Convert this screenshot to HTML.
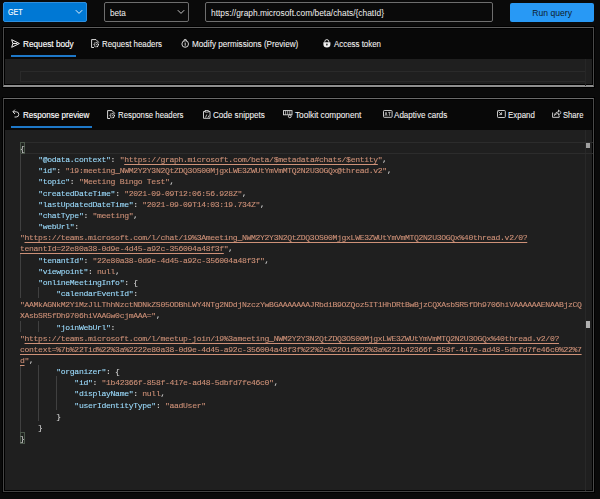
<!DOCTYPE html>
<html><head><meta charset="utf-8">
<style>
*{margin:0;padding:0;box-sizing:border-box}
html,body{width:600px;height:499px;overflow:hidden;background:#0a0a0a;font-family:"Liberation Sans",sans-serif;color:#f3f2f1;position:relative}
.dd{position:absolute;top:2px;height:20px;border:1px solid #6e6e6e;border-radius:2px;background:#0a0a0a;font-size:8.6px;line-height:18px;padding-left:6px;white-space:nowrap}
.get{left:3px;width:84px;background:#0078d4;border-color:#2f8fde;color:#fff;padding-left:5px}
.beta{left:104px;width:85px}
.url{left:205px;width:288px}
.run{left:510px;width:84px;top:2.5px;height:19px;background:#2899f5;border-radius:2px;color:#0e1d2c;font-size:8.6px;line-height:20px;text-align:center;position:absolute}
.chev{position:absolute;top:6px;width:8px;height:6px}
.panel{position:absolute;left:3px;width:591px;border:1px solid #4a4a4a;background:#080808;box-shadow:0 0 0 1px #000}
.ring{position:absolute;left:4px;width:589px;border:1px solid #000}
.tab{position:absolute;font-size:9.2px;transform-origin:0 0;white-space:nowrap;color:#f3f2f1;line-height:10px;-webkit-text-stroke:0.08px #f3f2f1}
.ic{position:absolute;overflow:visible}
.ul{position:absolute;height:2px;background:#1e78c8}
.ed{position:absolute;background:#1f1f1f}
.code{position:absolute;left:20px;font-family:"Liberation Mono",monospace;font-size:8.1px;letter-spacing:-0.328px;white-space:pre;line-height:11.15px;color:#d4d4d4;will-change:transform;-webkit-text-stroke:0.1px currentColor}
.k{color:#9cdcfe}.s{color:#ce9178}.u{color:#ce9178;text-decoration:underline;text-underline-offset:1.5px}
.guide{position:absolute;width:1px;background:#404040}
</style></head><body>
<div class="dd get"><span style="display:inline-block;transform:scaleX(0.79);transform-origin:0 0;font-size:9px;position:relative;top:-0.4px;left:-0.6px;-webkit-text-stroke:0.12px #fff">GET</span><svg class="chev" style="left:71px" viewBox="0 0 8 6"><path d="M0.8 1.2 L4 4.4 L7.2 1.2" fill="none" stroke="#fff" stroke-width="0.9"/></svg></div>
<div class="dd beta" style="padding-left:5px"><span style="display:inline-block;transform:scaleX(0.89);transform-origin:0 0;font-size:9.2px;position:relative;top:0.5px">beta</span><svg class="chev" style="left:72px" viewBox="0 0 8 6"><path d="M0.8 1.2 L4 4.4 L7.2 1.2" fill="none" stroke="#ddd" stroke-width="0.9"/></svg></div>
<div class="dd url" style="padding-left:5px"><span style="display:inline-block;transform:scaleX(0.913);transform-origin:0 0;font-size:9.2px;position:relative;top:0.5px">https://graph.microsoft.com/beta/chats/{chatId}</span></div>
<div class="run"><span style="display:inline-block;transform:scaleX(0.936);transform-origin:50% 0;font-size:9.2px;position:relative;top:0px">Run query</span></div>

<div class="panel" style="top:27px;height:60px;border-top-color:#5e5e5e;border-bottom:2px solid #8e8e8e"></div><div class="ring" style="top:28px;height:57px"></div>
<!-- request tabs -->
<svg class="ic" style="left:10.5px;top:38.5px" width="9" height="9" viewBox="0 0 9 9"><path d="M0.7 0.7 L8.4 4.5 L0.7 8.3 L1.9 4.5 Z" fill="none" stroke="#ececec" stroke-width="1" stroke-linejoin="round"/><path d="M1.9 4.5 H6.2" stroke="#ececec" stroke-width="1.1"/></svg>
<div class="tab" style="left:23px;top:39px;transform:scaleX(0.8947);-webkit-text-stroke:0.15px #fff;color:#fff">Request body</div>
<div class="ul" style="left:11px;top:55px;width:65px"></div>
<svg class="ic" style="left:91px;top:39px" width="9" height="9" viewBox="0 0 9 9"><path d="M3 8.5 H0.6 V0.6 H5 L7.6 3.2 V3.6" fill="none" stroke="#e4e4e4" stroke-width="0.95"/><circle cx="5.3" cy="5.6" r="2.1" fill="none" stroke="#e8e8e8" stroke-width="1.3" stroke-dasharray="0.9 0.5"/><circle cx="5.3" cy="5.6" r="0.6" fill="#d8d8d8"/></svg>
<div class="tab" style="left:102px;top:39px;transform:scaleX(0.8571)">Request headers</div>
<svg class="ic" style="left:181px;top:39px" width="9" height="9" viewBox="0 0 9 9"><circle cx="4.2" cy="5" r="3.3" fill="none" stroke="#e8e8e8" stroke-width="0.9"/><path d="M2.8 1.8 A1.4 1.4 0 0 1 5.6 1.8" fill="none" stroke="#e8e8e8" stroke-width="0.9"/><path d="M4.2 3.5 V6" stroke="#e8e8e8" stroke-width="0.9"/><circle cx="4.2" cy="6.8" r="0.5" fill="#fff"/></svg>
<div class="tab" style="left:192px;top:39px;transform:scaleX(0.8858)">Modify permissions (Preview)</div>
<svg class="ic" style="left:323px;top:39px" width="8" height="9" viewBox="0 0 8 9"><path d="M1.8 3.3 V2.6 A2 2 0 0 1 5.8 2.6 V3.3" fill="none" stroke="#f0f0f0" stroke-width="0.9"/><path d="M0.4 3.3 H7.4 V5.5 A3.5 3 0 0 1 0.4 5.5 Z" fill="#f0f0f0"/><ellipse cx="3.9" cy="5.6" rx="0.7" ry="1.1" fill="#0a0a0a"/></svg>
<div class="tab" style="left:334px;top:39px;transform:scaleX(0.8600)">Access token</div>
<div class="ed" style="left:5px;top:59px;width:587px;height:25px"></div>
<div style="position:absolute;left:20px;top:71px;width:566px;height:11px;border:1px solid #2a2a2a"></div><div style="position:absolute;left:585px;top:59px;width:8px;height:27px;border-left:1px solid #262626"></div>

<div class="panel" style="top:98px;height:394px;border-top-color:#6a6a6a;border-left-color:#454545;border-bottom-color:#424242"></div><div class="ring" style="top:99px;height:392px"></div>
<!-- response tabs -->
<svg class="ic" style="left:12px;top:109px" width="8" height="9" viewBox="0 0 8 9"><path d="M3 0.6 L0.8 2.8 L3 5" fill="none" stroke="#e8e8e8" stroke-width="0.9" stroke-linejoin="round"/><path d="M1 2.8 H4.2 A2.6 2.6 0 0 1 4.2 8 H2.5" fill="none" stroke="#e8e8e8" stroke-width="0.9"/></svg>
<div class="tab" style="left:23px;top:110px;transform:scaleX(0.8789);-webkit-text-stroke:0.15px #fff;color:#fff">Response preview</div>
<div class="ul" style="left:11px;top:125.5px;width:81px"></div>
<svg class="ic" style="left:107px;top:110px" width="9" height="9" viewBox="0 0 9 9"><path d="M3 8.5 H0.6 V0.6 H5 L7.6 3.2 V3.6" fill="none" stroke="#e4e4e4" stroke-width="0.95"/><circle cx="5.3" cy="5.6" r="2.1" fill="none" stroke="#e8e8e8" stroke-width="1.3" stroke-dasharray="0.9 0.5"/><circle cx="5.3" cy="5.6" r="0.6" fill="#d8d8d8"/></svg>
<div class="tab" style="left:118px;top:110px;transform:scaleX(0.8494)">Response headers</div>
<svg class="ic" style="left:203px;top:110px" width="9" height="9" viewBox="0 0 9 9"><path d="M2 1.5 H0.5 V8.3 H7 V1.5 H5.5" fill="none" stroke="#e0e0e0" stroke-width="0.9"/><rect x="2.2" y="0.5" width="3" height="1.6" fill="none" stroke="#e0e0e0" stroke-width="0.8"/><path d="M2.5 7.5 L3.8 4.5 M5 7.5 L6 5.5" stroke="#e0e0e0" stroke-width="0.8"/></svg>
<div class="tab" style="left:213px;top:110px;transform:scaleX(0.8814)">Code snippets</div>
<svg class="ic" style="left:283px;top:110px" width="10" height="8" viewBox="0 0 10 8"><rect x="0.5" y="0.6" width="8.5" height="4.2" fill="none" stroke="#e0e0e0" stroke-width="0.9"/><path d="M2.6 0.6 V4.8 M4.7 0.6 V4.8 M6.8 0.6 V4.8" stroke="#e0e0e0" stroke-width="0.7"/><circle cx="6.8" cy="6.3" r="1.4" fill="#0a0a0a" stroke="#e8e8e8" stroke-width="0.9"/></svg>
<div class="tab" style="left:295px;top:110px;transform:scaleX(0.8960)">Toolkit component</div>
<svg class="ic" style="left:383px;top:110px" width="10" height="8" viewBox="0 0 10 8"><rect x="0.5" y="0.5" width="8.6" height="6.8" rx="0.8" fill="none" stroke="#e0e0e0" stroke-width="0.9"/><path d="M2 5.8 L3 2.2 L4 5.8 M5.2 2.4 H7.6 M6.4 2.4 V5.8" fill="none" stroke="#e0e0e0" stroke-width="0.7"/></svg>
<div class="tab" style="left:394px;top:110px;transform:scaleX(0.8787)">Adaptive cards</div>
<svg class="ic" style="left:497px;top:110px" width="9" height="8" viewBox="0 0 9 8"><rect x="0.5" y="0.5" width="7.8" height="7" rx="0.8" fill="none" stroke="#e0e0e0" stroke-width="0.9"/><path d="M1.5 1.5 L4.5 4.5 M2.2 4.6 H4.6 V2.2" fill="none" stroke="#e0e0e0" stroke-width="0.8"/></svg>
<div class="tab" style="left:508px;top:110px;transform:scaleX(0.8613)">Expand</div>
<svg class="ic" style="left:552px;top:109px" width="10" height="9" viewBox="0 0 10 9"><path d="M0.6 3.5 V8.3 H7.2 V6.5" fill="none" stroke="#e0e0e0" stroke-width="0.9"/><path d="M2.5 6.5 C2.5 4 4.5 3 6.5 3 V1 L9.2 3.6 L6.5 6.2 V4.5 C5 4.5 3.5 5 2.5 6.5 Z" fill="none" stroke="#e8e8e8" stroke-width="0.8" stroke-linejoin="round"/></svg>
<div class="tab" style="left:563px;top:110px;transform:scaleX(0.8320)">Share</div>

<div class="ed" style="left:5px;top:130px;width:587px;height:360px"></div>
<!-- overview ruler -->
<div style="position:absolute;left:585px;top:130px;width:8px;height:361px;border-left:1px solid #282828"></div>
<div style="position:absolute;left:586px;top:142px;width:4px;height:6px;background:#a0a0a0"></div>
<div style="position:absolute;left:586px;top:321px;width:4px;height:7px;background:#b0b0b0"></div>
<!-- current line -->
<div style="position:absolute;left:20px;top:142px;width:573px;height:12px;border-top:1px solid #2c2c2c;border-bottom:1px solid #2c2c2c"></div>
<div style="position:absolute;left:20px;top:142px;width:5px;height:12px;border:1px solid #4a564a;background:#1f231f"></div>
<div style="position:absolute;left:20px;top:432px;width:5px;height:12px;border:1px solid #4a564a;background:#1f231f"></div>
<div class="guide" style="left:20px;top:153.35px;height:78.05px"></div>
<div class="guide" style="left:20px;top:253.70px;height:44.60px"></div>
<div class="guide" style="left:20px;top:320.60px;height:11.15px"></div>
<div class="guide" style="left:20px;top:365.20px;height:66.90px"></div>
<div class="guide" style="left:38px;top:287.15px;height:11.15px"></div>
<div class="guide" style="left:38px;top:320.60px;height:11.15px"></div>
<div class="guide" style="left:38px;top:365.20px;height:55.75px"></div>
<div class="guide" style="left:56px;top:376.35px;height:33.45px"></div>
<div class="code" style="top:143.1px">{
    <span class="k">&quot;@odata.context&quot;</span>: <span class="s">&quot;</span><span class="u">https://graph.microsoft.com/beta/$metadata#chats/$entity</span><span class="s">&quot;</span>,
    <span class="k">&quot;id&quot;</span>: <span class="s">&quot;19:meeting_NWM2Y2Y3N2QtZDQ3OS00MjgxLWE3ZWUtYmVmMTQ2N2U3OGQx@thread.v2&quot;</span>,
    <span class="k">&quot;topic&quot;</span>: <span class="s">&quot;Meeting Bingo Test&quot;</span>,
    <span class="k">&quot;createdDateTime&quot;</span>: <span class="s">&quot;2021-09-09T12:06:56.928Z&quot;</span>,
    <span class="k">&quot;lastUpdatedDateTime&quot;</span>: <span class="s">&quot;2021-09-09T14:03:19.734Z&quot;</span>,
    <span class="k">&quot;chatType&quot;</span>: <span class="s">&quot;meeting&quot;</span>,
    <span class="k">&quot;webUrl&quot;</span>:
<span class="s">&quot;</span><span class="u">https://teams.microsoft.com/l/chat/19%3Ameeting_NWM2Y2Y3N2QtZDQ3OS00MjgxLWE3ZWUtYmVmMTQ2N2U3OGQx%40thread.v2/0?</span>
<span class="u">tenantId=22e80a38-0d9e-4d45-a92c-356004a48f3f</span><span class="s">&quot;</span>,
    <span class="k">&quot;tenantId&quot;</span>: <span class="s">&quot;22e80a38-0d9e-4d45-a92c-356004a48f3f&quot;</span>,
    <span class="k">&quot;viewpoint&quot;</span>: <span class="s">null</span>,
    <span class="k">&quot;onlineMeetingInfo&quot;</span>: {
        <span class="k">&quot;calendarEventId&quot;</span>:
<span class="s">&quot;AAMkAGNkM2Y1MzJlLThhNzctNDNkZS05ODBhLWY4NTg2NDdjNzczYwBGAAAAAAAJRbdiB9OZQoz5IT1HhDRtBwBjzCQXAsbSR5fDh9706hiVAAAAAAENAABjzCQ</span>
<span class="s">XAsbSR5fDh9706hiVAAGw0cjmAAA=&quot;</span>,
        <span class="k">&quot;joinWebUrl&quot;</span>:
<span class="s">&quot;</span><span class="u">https://teams.microsoft.com/l/meetup-join/19%3ameeting_NWM2Y2Y3N2QtZDQ3OS00MjgxLWE3ZWUtYmVmMTQ2N2U3OGQx%40thread.v2/0?</span>
<span class="u">context=%7b%22Tid%22%3a%2222e80a38-0d9e-4d45-a92c-356004a48f3f%22%2c%22Oid%22%3a%221b42366f-858f-417e-ad48-5dbfd7fe46c0%22%7</span>
<span class="u">d</span><span class="s">&quot;</span>,
        <span class="k">&quot;organizer&quot;</span>: {
            <span class="k">&quot;id&quot;</span>: <span class="s">&quot;1b42366f-858f-417e-ad48-5dbfd7fe46c0&quot;</span>,
            <span class="k">&quot;displayName&quot;</span>: <span class="s">null</span>,
            <span class="k">&quot;userIdentityType&quot;</span>: <span class="s">&quot;aadUser&quot;</span>
        }
    }
}</div>
</body></html>
